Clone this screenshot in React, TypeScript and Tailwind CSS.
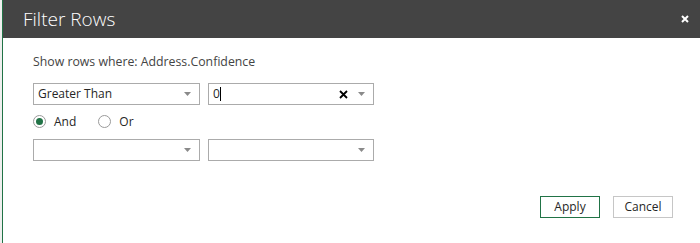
import React from 'react';

function Arrow() {
  return (
    <svg width="7" height="4" viewBox="0 0 7 4" className="shrink-0">
      <path d="M0 0h7L3.5 4z" fill="#8a8a8a" />
    </svg>
  );
}

function Select({ label, w }: { label?: string; w: string }) {
  return (
    <div className={`${w} h-[22px] border border-[#ababab] bg-white flex items-center pl-[4px] pr-[8px]`}>
      <span className="flex-1 text-[12px] text-[#262626] leading-none">{label}</span>
      <Arrow />
    </div>
  );
}

function Radio({ checked, label }: { checked?: boolean; label: string }) {
  return (
    <div className="flex items-center gap-[8px]">
      <div className="w-[13px] h-[13px] rounded-full border border-[#9a9a9a] flex items-center justify-center">
        {checked && <div className="w-[7px] h-[7px] rounded-full bg-[#217346]" />}
      </div>
      <span className="text-[12px] text-[#262626] leading-none">{label}</span>
    </div>
  );
}

export default function App() {
  return (
    <div
      className="w-[700px] h-[243px] flex bg-white overflow-hidden"
      style={{ fontFamily: '"Open Sans", "Liberation Sans", sans-serif' }}
    >
      {/* background sliver */}
      <div className="w-[2px] bg-[#efefef]" />
      <div className="w-[1px] bg-[#217346]" />

      <div className="flex-1 flex flex-col">
        {/* Header */}
        <div className="h-[38px] bg-[#444444] flex items-center justify-between pl-[20px] pr-[11px]">
          <span className="text-[19px] font-light text-white leading-none">Filter Rows</span>
          <svg width="8" height="8" viewBox="0 0 8 8">
            <path d="M1 1l6 6M7 1L1 7" stroke="#fff" strokeWidth="2" />
          </svg>
        </div>

        {/* Body */}
        <div className="flex flex-col pl-[30px] pt-[18px]">
          <div className="text-[12.3px] text-[#444] leading-none h-[15px]">Show rows where: Address.Confidence</div>

          <div className="flex gap-[8px] mt-[12px]">
            <Select label="Greater Than" w="w-[167px]" />
            <div className="w-[166px] h-[22px] border border-[#ababab] bg-white flex items-center pl-[4px] pr-[8px]">
              <span className="text-[12px] text-[#262626] leading-none">0</span>
              <span className="w-px h-[14px] bg-black" />
              <span className="flex-1" />
              <svg width="9" height="9" viewBox="0 0 9 9" className="mr-[10px]">
                <path d="M1 1l7 7M8 1L1 8" stroke="#000" strokeWidth="1.8" />
              </svg>
              <Arrow />
            </div>
          </div>

          <div className="flex items-center gap-[22px] mt-[10px] h-[13px]">
            <Radio checked label="And" />
            <Radio label="Or" />
          </div>

          <div className="flex gap-[8px] mt-[11px]">
            <Select w="w-[167px]" />
            <Select w="w-[166px]" />
          </div>
        </div>

        {/* Footer */}
        <div className="flex justify-end gap-[13px] pr-[27px] mt-[35px]">
          <button className="w-[60px] h-[22px] border border-[#217346] text-[12px] text-[#262626] bg-white">Apply</button>
          <button className="w-[60px] h-[22px] border border-[#c6c6c6] text-[12px] text-[#262626] bg-white">Cancel</button>
        </div>
      </div>
    </div>
  );
}
